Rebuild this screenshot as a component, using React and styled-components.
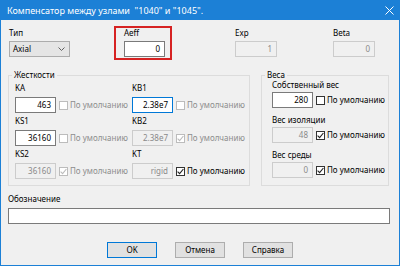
import React from 'react';
import styled, { createGlobalStyle } from 'styled-components';

const Global = createGlobalStyle`
  html, body { margin: 0; padding: 0; background: #f0f0f0; }
  body {
    width: 400px; height: 266px; overflow: hidden;
    font-family: "Noto Sans", "DejaVu Sans", sans-serif;
    -webkit-font-smoothing: antialiased;
  }
  * { box-sizing: border-box; }
`;

const Window = styled.div`
  width: 400px;
  height: 266px;
  background: #f0f0f0;
  border: 1px solid #1c80d6;
  border-top: none;
  display: flex;
  flex-direction: column;
`;

const TitleBar = styled.div`
  height: 20px;
  margin: 0 -1px;
  background: #1c80d6;
  color: #fff;
  font-size: 9px;
  display: flex;
  align-items: center;
  justify-content: space-between;
  padding: 0 6px 0 7px;
  white-space: pre;
`;

const CloseIcon = () => (
  <svg width="9" height="9" viewBox="0 0 9 9">
    <path d="M0.5 0.5 L8.5 8.5 M8.5 0.5 L0.5 8.5" stroke="#fff" strokeWidth="1" />
  </svg>
);

const TopRow = styled.div`
  display: flex;
  align-items: flex-start;
  margin-top: 6px;
`;

const Field = styled.div`
  display: flex;
  flex-direction: column;
  margin-left: ${p => p.$left}px;
  padding-top: 2px;
`;

const HighlightBox = styled.div`
  display: flex;
  flex-direction: column;
  margin-left: ${p => p.$left}px;
  width: 58px;
  height: 34px;
  border: 2px solid #d62222;
  padding-left: 8px;
`;

const Label = styled.div`
  font-size: 8px;
  line-height: 10px;
  height: 10px;
  color: #000;
  margin-bottom: ${p => (p.$gap != null ? p.$gap : 3)}px;
  white-space: nowrap;
`;

const Input = styled.div`
  width: ${p => p.$w || 41}px;
  height: 16px;
  border: 1px solid ${p => (p.$focus ? '#0078d7' : p.$disabled ? '#cccccc' : '#7a7a7a')};
  background: ${p => (p.$disabled ? '#f0f0f0' : '#fff')};
  color: ${p => (p.$disabled ? '#8a8a8a' : '#000')};
  font-size: 8px;
  line-height: 14px;
  text-align: right;
  padding-right: 4px;
  flex-shrink: 0;
`;

const Combo = styled.div`
  width: 61px;
  height: 16px;
  border: 1px solid #acacac;
  background: #e5e5e5;
  font-size: 8px;
  line-height: 14px;
  padding-left: 3px;
  padding-right: 4px;
  display: flex;
  align-items: center;
  justify-content: space-between;
`;

const GroupsRow = styled.div`
  display: flex;
  margin-top: 10px;
  align-items: flex-start;
`;

const Group = styled.fieldset`
  margin: 0 0 0 ${p => p.$left}px;
  width: ${p => p.$w}px;
  height: 116px;
  border: 1px solid #dcdcdc;
  padding: 0;
  min-width: 0;
`;

const Legend = styled.legend`
  font-size: 8px;
  line-height: 10px;
  padding: 0 2px;
  margin-left: 3px;
  color: #000;
`;

const StiffGrid = styled.div`
  display: grid;
  grid-template-columns: 117px auto;
  row-gap: 3px;
  padding: 3px 0 0 6px;
`;

const WeightCol = styled.div`
  display: flex;
  flex-direction: column;
  row-gap: 7px;
  padding: 0 0 0 10px;
`;

const Cell = styled.div`
  display: flex;
  flex-direction: column;
`;

const Line = styled.div`
  display: flex;
  align-items: center;
`;

const Box = styled.span`
  width: 9px;
  height: 9px;
  margin-left: 3px;
  border: 1px solid ${p => (p.$disabled ? '#bcbcbc' : '#333')};
  background: #fff;
  display: inline-flex;
  align-items: center;
  justify-content: center;
  flex-shrink: 0;
`;

const CheckText = styled.span`
  font-size: 8px;
  line-height: 10px;
  margin-left: 2px;
  color: ${p => (p.$disabled ? '#8d8d8d' : '#000')};
  white-space: nowrap;
`;

const Check = ({ checked, disabled }) => (
  <>
    <Box $disabled={disabled}>
      {checked && (
        <svg width="7" height="7" viewBox="0 0 7 7">
          <path d="M0.6 3.6 L2.6 5.6 L6.4 1" fill="none" stroke={disabled ? '#bcbcbc' : '#222'} strokeWidth="1.1" />
        </svg>
      )}
    </Box>
    <CheckText $disabled={disabled}>По умолчанию</CheckText>
  </>
);

const NoteBlock = styled.div`
  display: flex;
  flex-direction: column;
  margin: 8px 0 0 7px;
`;

const ButtonRow = styled.div`
  display: flex;
  gap: 18px;
  margin: 18px 0 0 106px;
`;

const Button = styled.div`
  width: 50px;
  height: 16px;
  border: 1px solid ${p => (p.$default ? '#0078d7' : '#adadad')};
  background: #e1e1e1;
  font-size: 8px;
  line-height: 14px;
  text-align: center;
  color: #000;
`;

const Chevron = () => (
  <svg width="7" height="4" viewBox="0 0 7 4">
    <path d="M0.5 0.5 L3.5 3.5 L6.5 0.5" fill="none" stroke="#606060" strokeWidth="1" />
  </svg>
);

const stiff = [
  { l: 'KA', v: '463' },
  { l: 'KB1', v: '2.38e7', focus: true },
  { l: 'KS1', v: '36160' },
  { l: 'KB2', v: '2.38e7', disabled: true, checked: true },
  { l: 'KS2', v: '36160', disabled: true, checked: true },
  { l: 'KT', v: 'rigid', disabled: true, checked: true, cbEnabled: true },
];

const weights = [
  { l: 'Собственный вес', v: '280' },
  { l: 'Вес изоляции', v: '48', disabled: true, checked: true },
  { l: 'Вес среды', v: '0', disabled: true, checked: true },
];

export default function App() {
  return (
    <>
      <Global />
      <Window>
        <TitleBar>
          <span>Компенсатор между узлами  "1040" и "1045".</span>
          <CloseIcon />
        </TitleBar>
        <TopRow>
          <Field $left={8}>
            <Label>Тип</Label>
            <Combo>
              <span>Axial</span>
              <Chevron />
            </Combo>
          </Field>
          <HighlightBox $left={44}>
            <Label>Aeff</Label>
            <Input>0</Input>
          </HighlightBox>
          <Field $left={63}>
            <Label>Exp</Label>
            <Input $w={42} $disabled>1</Input>
          </Field>
          <Field $left={56}>
            <Label>Beta</Label>
            <Input $w={42} $disabled>0</Input>
          </Field>
        </TopRow>
        <GroupsRow>
          <Group $left={7} $w={242}>
            <Legend>Жесткости</Legend>
            <StiffGrid>
              {stiff.map(s => (
                <Cell key={s.l}>
                  <Label $gap={4}>{s.l}</Label>
                  <Line>
                    <Input $disabled={s.disabled} $focus={s.focus}>{s.v}</Input>
                    <Check checked={s.checked} disabled={!s.cbEnabled} />
                  </Line>
                </Cell>
              ))}
            </StiffGrid>
          </Group>
          <Group $left={11} $w={128}>
            <Legend>Веса</Legend>
            <WeightCol>
              {weights.map(w => (
                <Cell key={w.l}>
                  <Label $gap={2}>{w.l}</Label>
                  <Line>
                    <Input $disabled={w.disabled}>{w.v}</Input>
                    <Check checked={w.checked} />
                  </Line>
                </Cell>
              ))}
            </WeightCol>
          </Group>
        </GroupsRow>
        <NoteBlock>
          <Label $gap={4}>Обозначение</Label>
          <Input $w={382} />
        </NoteBlock>
        <ButtonRow>
          <Button $default>OK</Button>
          <Button>Отмена</Button>
          <Button>Справка</Button>
        </ButtonRow>
      </Window>
    </>
  );
}
